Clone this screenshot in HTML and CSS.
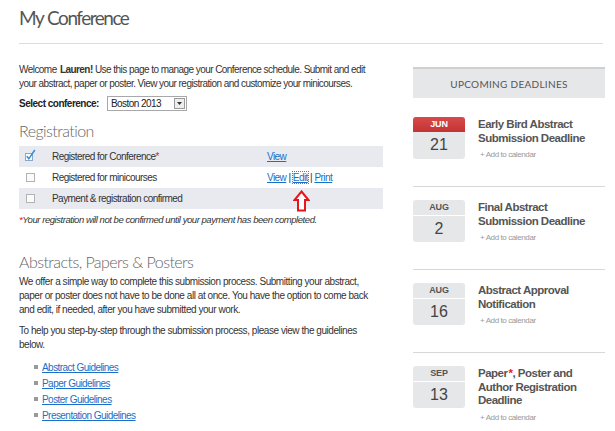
FILE: index.html
```html
<!DOCTYPE html>
<html>
<head>
<meta charset="utf-8">
<link rel="stylesheet" href="styles.css">
</head>
<body>
<div class="page">
  <header class="top">
    <h1 class="title">My Conference</h1>
  </header>
  <div class="cols">
    <main class="main">
      <p class="welcome">Welcome <b class="name">Lauren!</b> Use this page to manage your Conference schedule. Submit and edit your abstract, paper or poster. View your registration and customize your minicourses.</p>
      <div class="selrow">
        <span class="sellabel">Select conference:</span>
        <span class="select"><span class="selval">Boston 2013</span><span class="selbtn"><svg width="5" height="3" viewBox="0 0 5 3"><path d="M0 0h5L2.5 3z" fill="#333"/></svg></span></span>
      </div>
      <h2 class="sect">Registration</h2>
      <div class="regtable">
        <div class="regrow shade">
          <span class="cb checked"><svg width="11" height="12" viewBox="0 0 11 12"><rect x="0.5" y="4.5" width="7" height="7" fill="#fff" stroke="#8aa6c8"/><path d="M1.8 7.2l2 2.6L9.8 1" fill="none" stroke="#2f8de0" stroke-width="1.5"/></svg></span>
          <span class="rlabel">Registered for Conference<span class="req">*</span></span>
          <span class="ractions"><a href="#">View</a></span>
        </div>
        <div class="regrow">
          <span class="cb"><span class="box"></span></span>
          <span class="rlabel">Registered for minicourses</span>
          <span class="ractions"><a href="#">View</a> | <span class="editwrap"><a href="#" class="edit">Edit</a><svg class="arrow" width="17" height="22" viewBox="0 0 17 22"><path d="M8.5 1.5L15.5 10H12V20.5H5V10H1.5Z" fill="#fff" stroke="#e8141b" stroke-width="2"/></svg></span> | <a href="#">Print</a></span>
        </div>
        <div class="regrow shade">
          <span class="cb"><span class="box"></span></span>
          <span class="rlabel">Payment &amp; registration confirmed</span>
          <span class="ractions"></span>
        </div>
      </div>
      <p class="note"><span class="req">*</span>Your registration will not be confirmed until your payment has been completed.</p>
      <h2 class="sect sect2">Abstracts, Papers &amp; Posters</h2>
      <p class="para">We offer a simple way to complete this submission process. Submitting your abstract, paper or poster does not have to be done all at once. You have the option to come back and edit, if needed, after you have submitted your work.</p>
      <p class="para">To help you step-by-step through the submission process, please view the guidelines below.</p>
      <ul class="guides">
        <li><a href="#">Abstract Guidelines</a></li>
        <li><a href="#">Paper Guidelines</a></li>
        <li><a href="#">Poster Guidelines</a></li>
        <li><a href="#">Presentation Guidelines</a></li>
      </ul>
    </main>
    <aside class="side">
      <div class="sidehead">UPCOMING DEADLINES</div>
      <div class="dl">
        <div class="date"><div class="mon red">JUN</div><div class="day">21</div></div>
        <div class="info"><div class="dtitle">Early Bird Abstract Submission Deadline</div><a href="#" class="add">+ Add to calendar</a></div>
      </div>
      <div class="dl">
        <div class="date"><div class="mon">AUG</div><div class="day">2</div></div>
        <div class="info"><div class="dtitle">Final Abstract Submission Deadline</div><a href="#" class="add">+ Add to calendar</a></div>
      </div>
      <div class="dl">
        <div class="date"><div class="mon">AUG</div><div class="day">16</div></div>
        <div class="info"><div class="dtitle">Abstract Approval Notification</div><a href="#" class="add">+ Add to calendar</a></div>
      </div>
      <div class="dl last">
        <div class="date"><div class="mon">SEP</div><div class="day">13</div></div>
        <div class="info"><div class="dtitle">Paper<span class="req sup">*</span>, Poster and Author Registration Deadline</div><a href="#" class="add">+ Add to calendar</a></div>
      </div>
    </aside>
  </div>
</div>
</body>
</html>
```

FILE: styles.css
```css
html, body { margin: 0; padding: 0; background: #fff; }
body { font-family: "Liberation Sans", Arial, sans-serif; font-size: 10px; letter-spacing: -0.55px; color: #333; }
.page { width: 615px; overflow: hidden; }
.top { margin: 0 12px 0 19px; border-bottom: 1px solid #dcdcdc; height: 43px; }
.title { margin: 0; padding-top: 6px; font-family: Lato, "Open Sans", sans-serif; font-weight: 400; font-size: 19px; color: #555; letter-spacing: -1.5px; word-spacing: 1px; }
.cols { display: flex; padding-left: 19px; gap: 30px; }
.main { width: 364px; }
.welcome { margin: 19px 0 0; line-height: 14px; }
.name { margin-left: 1px; }
.selrow { display: flex; align-items: center; margin-top: 5px; height: 14px; }
.sellabel { font-weight: bold; margin-right: 8px; color: #222; letter-spacing: -0.5px; }
.select { display: inline-flex; align-items: center; width: 78px; height: 13px; border: 1px solid #a8a8a8; background: #fff; }
.selval { flex: 1; padding-left: 3px; color: #222; line-height: 13px; }
.selbtn { width: 11px; height: 11px; margin-right: 1px; border: 1px solid #9a9a9a; box-sizing: border-box; background: #eee; display: flex; align-items: center; justify-content: center; }
.sect { margin: 11px 0 5px; font-family: Lato, "Open Sans", sans-serif; font-weight: 300; font-size: 16px; color: #666; line-height: 20px; letter-spacing: -0.55px; }
.sect2 { margin-top: 26px; margin-bottom: 3px; }
.regtable { width: 364px; }
.regrow { display: flex; align-items: center; height: 21px; color: #333; }
.regrow.shade { background: #e8eaf0; }
.cb { width: 26px; padding-left: 7px; display: flex; }
.cb .box { display: block; width: 7px; height: 7px; border: 1px solid #b3b3b3; background: #fafafa; }
.cb.checked { padding-left: 6px; width: 27px; }
.cb.checked svg { margin-top: -4px; }
.rlabel { width: 215px; }
.ractions a { color: #1a6fc9; text-decoration: underline; }
.req { color: #e02020; }
.sup { margin-left: 1px; }
.editwrap { position: relative; display: inline-block; }
.edit { outline: 1px dotted #777; }
.arrow { position: absolute; left: 50%; margin-left: -7px; top: 18px; }
.note { margin: 5px 0 0; line-height: 12px; font-style: italic; font-size: 9.5px; letter-spacing: -0.45px; color: #333; }
.para { margin: 0 0 7px; line-height: 14px; letter-spacing: -0.45px; }
.guides { list-style: none; margin: 7px 0 0; padding-left: 15px; }
.guides li { height: 16px; display: flex; align-items: center; }
.guides li::before { content: ""; width: 4px; height: 4px; background: #999; margin-right: 4px; }
.guides a { color: #1a6fc9; }
.side { width: 192px; padding-top: 23px; }
.sidehead { background: #e6e7e9; border-top: 2px solid #cfd0d2; height: 29px; display: flex; align-items: center; justify-content: center; font-family: Lato, "Open Sans", sans-serif; font-size: 10px; letter-spacing: 0.3px; color: #555; }
.dl { display: flex; border-bottom: 1px solid #d8d8d8; height: 69px; margin-top: 19px; }
.dl + .dl { margin-top: 13px; }
.dl.last { border-bottom: none; }
.date { width: 52px; flex: none; border-radius: 3px; overflow: hidden; background: #e6e7e9; height: 42px; }
.mon { height: 15px; line-height: 15px; text-align: center; font-size: 9px; font-weight: bold; color: #555; border-bottom: 1px solid #fff; letter-spacing: -0.2px; }
.mon.red { background: linear-gradient(#d94a4a, #c23434); color: #fff; border-bottom: none; }
.day { height: 26px; line-height: 26px; text-align: center; font-size: 16px; color: #444; letter-spacing: 0; }
.info { margin-left: 13px; padding-top: 1px; }
.dtitle { font-weight: bold; font-size: 11.5px; line-height: 13.5px; color: #555; letter-spacing: -0.5px; }
.add { display: block; margin-top: 5px; font-size: 8px; color: #999; text-decoration: none; padding-left: 2px; letter-spacing: -0.4px; }
```
